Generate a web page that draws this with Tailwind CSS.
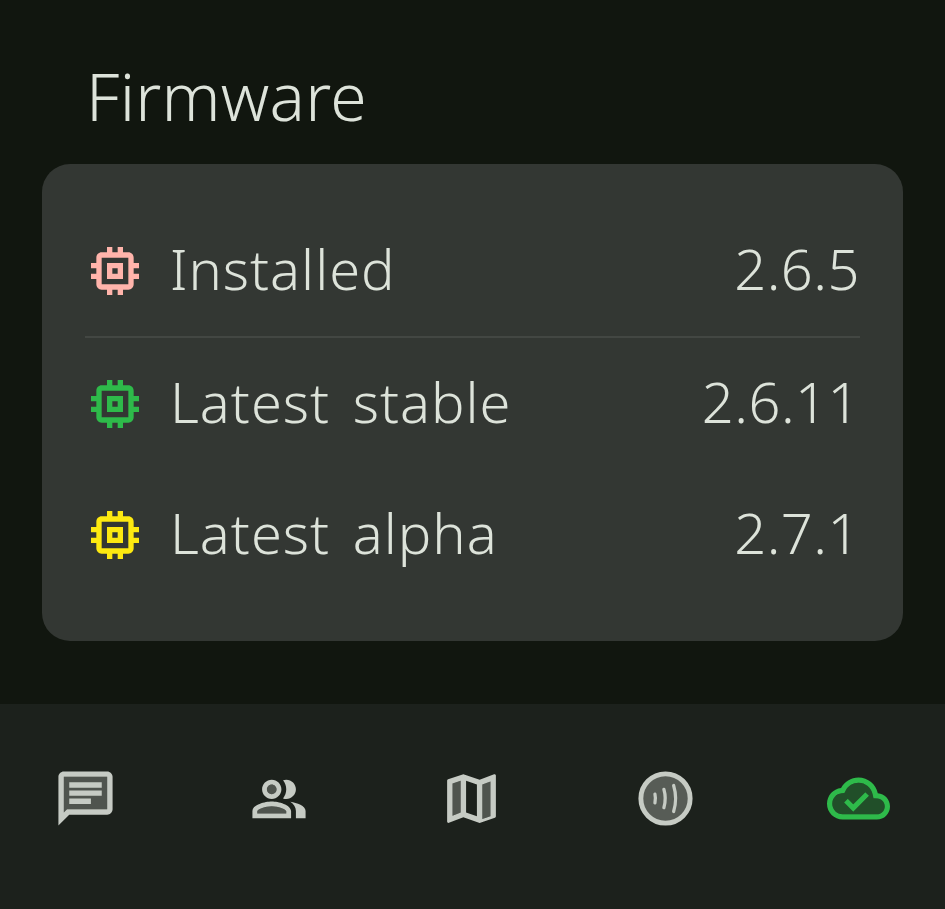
<!DOCTYPE html>
<html lang="en">
  <head>
    <meta charset="UTF-8" />
    <meta name="viewport" content="width=device-width, initial-scale=1.0" />
    <title>Firmware</title>
    <script src="https://cdn.jsdelivr.net/npm/@tailwindcss/browser@4"></script>
  </head>
  <body class="bg-[#11160f] font-['Noto_Sans',sans-serif] font-light text-[#dde3da] overflow-hidden">
    <div class="w-[945px] h-[909px] flex flex-col blur-[0.5px]">
      <!-- header -->
      <h1 class="pl-[86px] h-[164px] pt-[49px] text-[66px] leading-[92px] tracking-[0.25px]">Firmware</h1>

      <!-- firmware card -->
      <section class="mx-[42px] h-[477px] rounded-[28px] bg-[#333733] px-[43px] pt-[40px] text-[56px]">
        <div class="h-[134px] pb-[1px] flex items-center justify-between border-b-2 border-[#434743]">
          <div class="flex items-center gap-[23px] -ml-[2px]">
            <svg class="w-[64px] h-[64px] mt-[2px] text-[#ffb4ab]" viewBox="0 0 24 24" fill="currentColor"><path d="M15 9H9v6h6V9zm-2 4h-2v-2h2v2zm8-2V9h-2V7c0-1.1-.9-2-2-2h-2V3h-2v2h-2V3H9v2H7c-1.1 0-2 .9-2 2v2H3v2h2v2H3v2h2v2c0 1.1.9 2 2 2h2v2h2v-2h2v2h2v-2h2c1.1 0 2-.9 2-2v-2h2v-2h-2v-2h2zm-4 6H7V7h10v10z"/></svg>
            <span class="-mt-[3px] tracking-[1px]">Installed</span>
          </div>
          <span class="-mt-[3px] tracking-[0.5px]">2.6.5</span>
        </div>
        <div class="h-[130px] flex items-center justify-between">
          <div class="flex items-center gap-[23px] -ml-[2px]">
            <svg class="w-[64px] h-[64px] mt-[2px] text-[#2eba4a]" viewBox="0 0 24 24" fill="currentColor"><path d="M15 9H9v6h6V9zm-2 4h-2v-2h2v2zm8-2V9h-2V7c0-1.1-.9-2-2-2h-2V3h-2v2h-2V3H9v2H7c-1.1 0-2 .9-2 2v2H3v2h2v2H3v2h2v2c0 1.1.9 2 2 2h2v2h2v-2h2v2h2v-2h2c1.1 0 2-.9 2-2v-2h2v-2h-2v-2h2zm-4 6H7V7h10v10z"/></svg>
            <span class="-mt-[4px] tracking-[1px] [word-spacing:7px]">Latest stable</span>
          </div>
          <span class="-mt-[4px] tracking-[0.5px]">2.6.11</span>
        </div>
        <div class="h-[131px] flex items-center justify-between">
          <div class="flex items-center gap-[23px] -ml-[2px]">
            <svg class="w-[64px] h-[64px] mt-[2px] text-[#fde910]" viewBox="0 0 24 24" fill="currentColor"><path d="M15 9H9v6h6V9zm-2 4h-2v-2h2v2zm8-2V9h-2V7c0-1.1-.9-2-2-2h-2V3h-2v2h-2V3H9v2H7c-1.1 0-2 .9-2 2v2H3v2h2v2H3v2h2v2c0 1.1.9 2 2 2h2v2h2v-2h2v2h2v-2h2c1.1 0 2-.9 2-2v-2h2v-2h-2v-2h2zm-4 6H7V7h10v10z"/></svg>
            <span class="-mt-[4px] tracking-[1px] [word-spacing:7px]">Latest alpha</span>
          </div>
          <span class="-mt-[4px] tracking-[0.5px]">2.7.1</span>
        </div>
      </section>

      <!-- bottom nav -->
      <nav class="mt-[63px] flex-1 bg-[#1c211c] pl-[53px] pr-[55px] pb-[16px] flex items-center justify-between text-[#c6cbc4]">
        <svg class="w-[65px] h-[65px]" viewBox="0 0 24 24" fill="currentColor">
          <path opacity=".3" d="M4 17.17 5.17 16H20V4H4v13.17z"/>
          <path d="M20 2H4c-1.1 0-2 .9-2 2v18l4-4h14c1.1 0 2-.9 2-2V4c0-1.1-.9-2-2-2zm0 14H5.17L4 17.17V4h16v12z"/>
          <path d="M6 12h8v2H6zm0-3h12v2H6zm0-3h12v2H6z"/>
        </svg>
        <svg class="w-[58px] h-[58px] mx-[3px]" viewBox="0 0 24 24" fill="currentColor">
          <path d="M16.67 13.13C18.04 14.06 19 15.32 19 17v3h4v-3c0-2.18-3.57-3.47-6.33-3.87z"/>
          <path d="M15 12c2.21 0 4-1.79 4-4s-1.79-4-4-4c-.47 0-.91.1-1.33.24C14.5 5.27 15 6.58 15 8s-.5 2.73-1.33 3.76c.42.14.86.24 1.33.24z"/>
          <path d="M9 12c2.21 0 4-1.79 4-4s-1.79-4-4-4-4 1.79-4 4 1.79 4 4 4zm0-6c1.1 0 2 .9 2 2s-.9 2-2 2-2-.9-2-2 .9-2 2-2z"/>
          <path d="M9 13c-2.67 0-8 1.34-8 4v3h16v-3c0-2.66-5.33-4-8-4zm6 5H3v-.99C3.2 16.29 6.3 15 9 15s5.8 1.29 6 2v1z"/>
          <path opacity=".3" d="M9 6a2 2 0 1 0 0 4 2 2 0 0 0 0-4zM3 17.01V18h12v-1c-.2-.71-3.3-2-6-2s-5.8 1.29-6 2.01z"/>
        </svg>
        <svg class="w-[65px] h-[65px] -ml-[1px] -translate-x-[1px]" viewBox="0 0 24 24" fill="currentColor">
          <path opacity=".3" d="M5 18.33l3-1.16V5.46l-3 1zM16 19.53l3-1.01V5.7l-3 1.16z"/>
          <path d="M20.5 3l-.16.03L15 5.1 9 3 3.36 4.9c-.21.07-.36.25-.36.48V20.5c0 .28.22.5.5.5l.16-.03L9 18.9l6 2.1 5.64-1.9c.21-.07.36-.25.36-.48V3.5c0-.28-.22-.5-.5-.5zM8 5.47v11.7l-3 1.16V6.46l3-1v.01zm6 13.11l-4-1.4V5.41l4 1.4v11.77zm5-.06l-3 1.01V6.86l3-1.16v12.82z"/>
        </svg>
        <svg class="w-[65px] h-[65px] -ml-[1px]" viewBox="0 0 24 24" fill="currentColor">
          <circle cx="12" cy="12" r="9.1" fill-opacity=".35" stroke="currentColor" stroke-width="1.8" stroke-opacity="1"/>
          <path d="M8.1 10.4c.25 1.05.25 2.15 0 3.2M11.4 8.6c.65 2.2.65 4.6 0 6.8M15 7.2c.95 3.1.95 6.5 0 9.6" fill="none" stroke="currentColor" stroke-width="1.2" stroke-linecap="round"/>
        </svg>
        <svg class="w-[63px] h-[63px] text-[#2eba4a]" viewBox="0 0 24 24" fill="currentColor">
          <path opacity=".3" d="M19.21 12.04l-1.53-.11-.3-1.5C16.88 7.86 14.62 6 12 6 9.94 6 8.08 7.14 7.12 8.96l-.5.95-1.07.11C3.53 10.24 2 11.95 2 14c0 2.21 1.79 4 4 4h13c1.65 0 3-1.35 3-3 0-1.55-1.22-2.86-2.79-2.96zM10 17l-3.5-3.5 1.41-1.41L10 14.18l4.6-4.6 1.41 1.41L10 17z"/>
          <path d="M19.35 10.04C18.67 6.59 15.64 4 12 4 9.11 4 6.6 5.64 5.35 8.04 2.34 8.36 0 10.91 0 14c0 3.31 2.69 6 6 6h13c2.76 0 5-2.24 5-5 0-2.64-2.05-4.78-4.65-4.96zM19 18H6c-2.21 0-4-1.79-4-4 0-2.05 1.53-3.76 3.56-3.97l1.07-.11.5-.95C8.08 7.14 9.94 6 12 6c2.62 0 4.88 1.86 5.39 4.43l.3 1.5 1.53.11c1.56.1 2.78 1.41 2.78 2.96 0 1.65-1.35 3-3 3zm-9-3.82l-2.09-2.09L6.5 13.5 10 17l6.01-6.01-1.41-1.41z"/>
        </svg>
      </nav>
    </div>
  </body>
</html>
